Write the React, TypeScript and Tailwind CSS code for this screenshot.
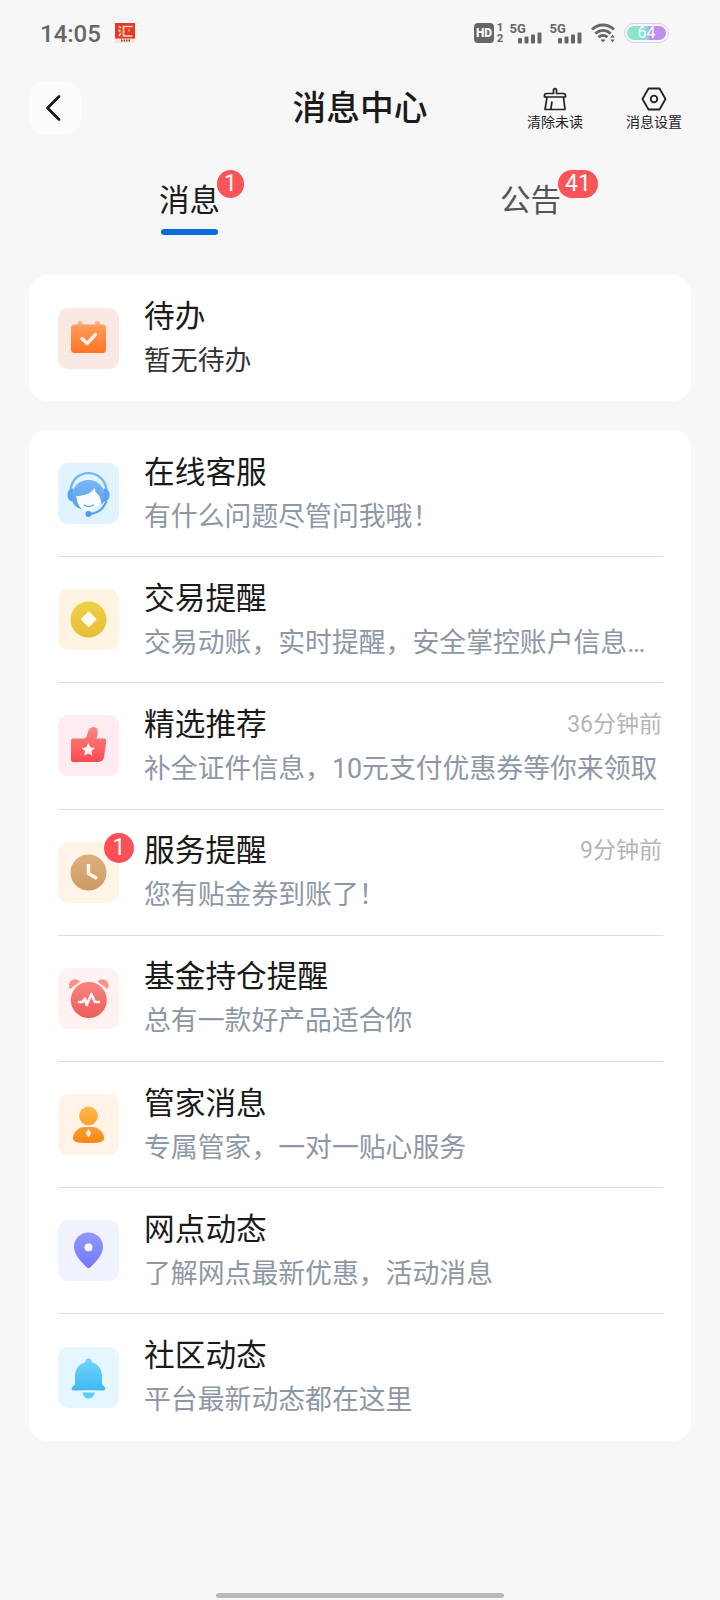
import type { ReactNode } from "react";

type Message = {
  title: string;
  desc: string;
  time?: string;
  badge?: number;
  tile: string;
  icon: ReactNode;
};

const Gradient = ({ id, from, to }: { id: string; from: string; to: string }) => (
  <defs>
    <linearGradient id={id} x1="0" y1="0" x2="0" y2="1">
      <stop offset="0" stopColor={from} />
      <stop offset="1" stopColor={to} />
    </linearGradient>
  </defs>
);

const TodoIcon = () => (
  <svg viewBox="0 0 61 61" className="size-full">
    <Gradient id="todo" from="#ff9d5c" to="#ff7424" />
    <rect x="19.500" y="13" width="5" height="8" rx="2.400" fill="#ffb083" />
    <rect x="37" y="13" width="5" height="8" rx="2.400" fill="#ffb083" />
    <rect x="13" y="16.500" width="35" height="28.500" rx="3.500" fill="url(#todo)" />
    <path d="M24 30.500l5 5 8.500-9" fill="none" stroke="#ffeee4" strokeWidth="3.400" strokeLinecap="round" strokeLinejoin="round" />
  </svg>
);

const ServiceIcon = () => (
  <svg viewBox="0 0 61 61" className="size-full">
    <Gradient id="service" from="#7cb9f5" to="#529ceb" />
    <path d="M12.500 27C15 4.500 46 4.500 48.500 27" fill="none" stroke="#76b5f3" strokeWidth="2.400" />
    <path d="M48.500 38C45.500 46 39 50.500 31 51" fill="none" stroke="#5ba3ee" strokeWidth="2.200" />
    <circle cx="30.500" cy="51" r="3" fill="#4f9aea" />
    <path d="M15.500 25.500V38.500C11.500 38.500 9.500 36 9.500 32S11.500 25.500 15.500 25.500Z" fill="#5ba3ee" />
    <path d="M45.500 25.500V38.500C49.500 38.500 51.500 36 51.500 32S49.500 25.500 45.500 25.500Z" fill="#5ba3ee" />
    <circle cx="30.500" cy="34" r="12.500" fill="#fafdff" />
    <path d="M14.500 38C10 10 51 10 46.500 38L43.500 42C43.500 36 41 32 37.500 29L36.500 25C33 31 25 33 18.500 33C18.500 38 20 43 24 46.500C19 45 15.500 42 14.500 38Z" fill="url(#service)" />
    <path d="M26.500 42c2.500 2.200 6.500 2.200 9 0" fill="none" stroke="#6aadf0" strokeWidth="1.400" strokeLinecap="round" />
  </svg>
);

const CoinIcon = () => (
  <svg viewBox="0 0 61 61" className="size-full">
    <Gradient id="coin" from="#efd04a" to="#e8bd36" />
    <circle cx="30.500" cy="30.500" r="18" fill="url(#coin)" />
    <rect x="25" y="24.500" width="11.500" height="11.500" rx="1" fill="#fffbed" transform="rotate(45 30.700 30.200)" />
  </svg>
);

const ThumbIcon = () => (
  <svg viewBox="0 0 61 61" className="size-full">
    <Gradient id="thumb" from="#ff8583" to="#fb4a4f" />
    <path d="M14.500 23.500H25C28 23.500 29 21 29.700 18C30.500 14 32.500 12 35.500 12C39 12 40.500 15 39.500 19L38.500 23.500H46Q48.500 23.500 48.300 26L46 42Q45 47 40 47H15Q13 47 13 45V25Q13 23.500 14.500 23.500Z" fill="url(#thumb)" />
    <path d="M30.300 28l2 4.300 4.700.6-3.500 3.200.9 4.700-4.100-2.300-4.100 2.300.9-4.700-3.500-3.200 4.700-.6z" fill="#fff3f4" />
  </svg>
);

const ClockIcon = () => (
  <svg viewBox="0 0 61 61" className="size-full">
    <Gradient id="clock" from="#dfb180" to="#cb9964" />
    <circle cx="30.500" cy="30.500" r="18" fill="url(#clock)" />
    <path d="M30.500 22V31.500L39 36.500" fill="none" stroke="#fff7ec" strokeWidth="3.400" strokeLinejoin="round" />
  </svg>
);

const FundIcon = () => (
  <svg viewBox="0 0 61 61" className="size-full">
    <Gradient id="fund" from="#f98580" to="#ef5b59" />
    <path d="M12 20.500C9.500 14 15.500 9 21.500 13.500Z" fill="#f8918c" stroke="#f8918c" strokeLinejoin="round" />
    <path d="M49.500 20.500C52 14 46 9 40 13.500Z" fill="#f8918c" stroke="#f8918c" strokeLinejoin="round" />
    <circle cx="30.800" cy="32" r="18" fill="url(#fund)" />
    <path d="M21 34H24.500L27 30.500L28.700 37L33.500 26L36.800 34H41" fill="none" stroke="#fff5f4" strokeWidth="2.600" strokeLinecap="round" strokeLinejoin="round" />
  </svg>
);

const ManagerIcon = () => (
  <svg viewBox="0 0 61 61" className="size-full">
    <Gradient id="head" from="#fdb948" to="#fba031" />
    <Gradient id="body" from="#fb9d33" to="#fa8513" />
    <circle cx="30.500" cy="21.800" r="9.400" fill="url(#head)" />
    <path d="M26 33H35C41 33 46 39 46 44C46 47 43 48.500 38 48.800Q30.500 49.300 23 48.800C18 48.500 15 47 15 44C15 39 20 33 26 33Z" fill="url(#body)" />
    <path d="M30.500 35l2.700 4.200-2.700 4.200-2.700-4.200z" fill="#fff6ea" />
  </svg>
);

const PinIcon = () => (
  <svg viewBox="0 0 61 61" className="size-full">
    <Gradient id="pin" from="#9298fa" to="#7279f7" />
    <path d="M30.500 12.500C22.500 12.500 16 18.700 16 26.800C16 35 23 41.500 29 47.600Q30.500 49 32 47.600C38 41.500 45 35 45 26.800C45 18.700 38.500 12.500 30.500 12.500Z" fill="url(#pin)" />
    <circle cx="30.500" cy="27.300" r="3.900" fill="#fff" />
  </svg>
);

const BellIcon = () => (
  <svg viewBox="0 0 61 61" className="size-full">
    <Gradient id="bell" from="#72d3fb" to="#3fbaf3" />
    <path d="M24.500 45.500H37Q35.500 51.500 30.500 51.500T24.500 45.500Z" fill="#5fcdf8" />
    <path d="M30.500 11.500C32.500 11.500 33.700 13 33.700 15C40 17 44 22 44 29V37.500L46.300 39.500C48 41.500 47.500 43.500 45 43.500Q30.500 42.800 16 43.500C13.500 43.500 13 41.500 14.700 39.500L17 37.500V29C17 22 21 17 27.300 15C27.300 13 28.500 11.500 30.500 11.500Z" fill="url(#bell)" />
  </svg>
);

const messages: Message[] = [
  { title: "在线客服", desc: "有什么问题尽管问我哦！", tile: "bg-[#e1f3fe]", icon: <ServiceIcon /> },
  { title: "交易提醒", desc: "交易动账，实时提醒，安全掌控账户信息…", tile: "bg-[#fff4e2]", icon: <CoinIcon /> },
  { title: "精选推荐", desc: "补全证件信息，10元支付优惠券等你来领取", time: "36分钟前", tile: "bg-[#ffecf1]", icon: <ThumbIcon /> },
  { title: "服务提醒", desc: "您有贴金券到账了！", time: "9分钟前", badge: 1, tile: "bg-[#fff4e8]", icon: <ClockIcon /> },
  { title: "基金持仓提醒", desc: "总有一款好产品适合你", tile: "bg-[#fff2f1]", icon: <FundIcon /> },
  { title: "管家消息", desc: "专属管家，一对一贴心服务", tile: "bg-[#fff3e8]", icon: <ManagerIcon /> },
  { title: "网点动态", desc: "了解网点最新优惠，活动消息", tile: "bg-[#f1f2ff]", icon: <PinIcon /> },
  { title: "社区动态", desc: "平台最新动态都在这里", tile: "bg-[#e6f6ff]", icon: <BellIcon /> },
];

const Signal = () => (
  <svg width="32" height="22" viewBox="0 0 32 22" fill="#666">
    <text x="-0.500" y="11" fontSize="13" fontWeight="700" fontFamily="Roboto">5G</text>
    <rect x="8" y="16" width="4" height="5.500" rx="1" />
    <rect x="14.500" y="14.500" width="4" height="7" rx="1" />
    <rect x="21" y="12.500" width="4" height="9" rx="1" />
    <rect x="27.500" y="10.500" width="4" height="11" rx="1" />
  </svg>
);

const StatusBar = () => (
  <div className="flex h-[66px] items-center pl-10 pr-[51px] text-[#666]">
    <span className="mt-[2px] text-[24px] font-medium">14:05</span>
    <svg width="20" height="20" viewBox="0 0 20 20" className="ml-[14px]">
      <rect width="20" height="20" fill="#fbe3d3" />
      <rect width="20" height="15.500" fill="#e5382c" />
      <path d="M4 3.500l2 1.500M3.500 7l2 1.500M4 13l2-3M17.500 3.500H8.500V13H17.500" fill="none" stroke="#ffdfae" strokeWidth="1.700" />
      <path d="M12.500 6.500h3l-1.500 2.500z" fill="#f7a35e" />
      <path d="M6 17.500h9" stroke="#7b4a3c" strokeWidth="1.800" strokeDasharray="1.500 1" />
    </svg>
    <div className="ml-auto flex items-center">
      <span className="flex size-5 items-center justify-center rounded-[4px] bg-[#666] text-[12px] font-black text-[#f7f7f7]">HD</span>
      <span className="ml-[2px] flex w-2 flex-col text-center text-[11.5px] font-bold leading-none">
        <span>1</span>
        <span>2</span>
      </span>
      <div className="ml-[6px] flex gap-2">
        <Signal />
        <Signal />
      </div>
      <svg width="24" height="20" viewBox="0 0 24 20" className="ml-[9px]" fill="none" stroke="#666" strokeWidth="2.800">
        <path d="M1 6.500C7.500.5 16.500.5 23 6.500" />
        <path d="M4.300 10.500C9 6.500 15 6.500 19.700 10.500" />
        <path d="M7.500 14.200C10.500 11.700 13.500 11.700 16.500 14.200" />
        <path d="M9.500 16.800Q12 15.500 14.500 16.800L12 19.500Z" fill="#666" stroke="none" />
        <path d="M19.300 14.500l2.200-3 2.200 3zM19.300 16.500l2.200 3 2.200-3z" fill="#666" stroke="none" />
      </svg>
      <span className="ml-[9px] flex h-5 w-[45px] rounded-full border border-[#dccfe8] p-[2px]">
        <span className="flex flex-1 items-center justify-center rounded-full bg-linear-to-r from-[#8beab6] via-[#83dce2] via-50% to-[#bc8ff0] to-60% text-[16px] leading-none text-white">64</span>
      </span>
    </div>
  </div>
);

const Header = () => (
  <header className="grid h-[83px] grid-cols-[1fr_auto_1fr] items-center pl-[29px] pr-[38px]">
    <button className="mt-[1px] flex size-[52px] items-center justify-center rounded-[14px] bg-[#fcfcfc]">
      <svg width="16" height="28" viewBox="0 0 16 28" fill="none" stroke="#1a1a1a" strokeWidth="2.800" strokeLinecap="round" strokeLinejoin="round" className="-ml-1">
        <path d="M14 2.500L2.500 14L14 25.500" />
      </svg>
    </button>
    <h1 className="ml-[9px] mt-[4px] text-[33.7px] font-medium text-[#1a1a1a]">消息中心</h1>
    <div className="mt-[2px] flex justify-end gap-[43px] text-[14px] leading-[18px] text-[#222]">
      <button className="flex flex-col items-center gap-[2px]">
        <svg width="24" height="24" viewBox="0 0 24 24" fill="none" stroke="#222" strokeWidth="1.700" strokeLinejoin="round">
          <path d="M10.500 6.500V2.500Q12 .8 13.500 2.500V6.500H20.500Q22.500 6.500 22.500 8.500V10H1.500V8.500Q1.500 6.500 3.500 6.500Z" />
          <path d="M4 10L2 22.500H22L20.500 10M9 14.500L7.800 22.500" />
        </svg>
        <span>清除未读</span>
      </button>
      <button className="flex flex-col items-center gap-[2px]">
        <svg width="26" height="24" viewBox="0 0 26 24" fill="none" stroke="#222" strokeWidth="1.800" strokeLinejoin="round">
          <path d="M7.500 1.500H18.500L24.500 12L18.500 22.500H7.500L1.500 12Z" />
          <circle cx="13" cy="12" r="3.300" />
        </svg>
        <span>消息设置</span>
      </button>
    </div>
  </header>
);

const Tab = ({ label, count, active }: { label: string; count: number; active?: boolean }) => (
  <div className="flex flex-1 flex-col items-center pt-[30px]">
    <div className={`relative text-[30.5px] leading-[44px] ${active ? "text-[#1a1a1a]" : "text-[#555]"}`}>
      {label}
      <span className="absolute -top-[9px] left-[58px] flex h-7 min-w-[27px] items-center justify-center rounded-full bg-[#fc5458] px-[7px] pb-[2px] text-[23px] leading-none text-white">
        {count}
      </span>
    </div>
    {active && <div className="mt-[6px] h-[6px] w-[57px] rounded-full bg-[#0a6bdb]" />}
  </div>
);

const Row = ({ title, desc, time, badge, tile, icon, descColor = "text-[#8d97a5]" }: Message & { descColor?: string }) => (
  <div className="flex h-full items-center gap-[25px]">
    <div className={`relative size-[61px] shrink-0 rounded-[10px] ${tile}`}>
      {icon}
      {badge && (
        <span className="absolute -top-[9px] left-[46px] flex size-[30px] items-center justify-center rounded-full bg-[#fc5056] text-[23px] leading-none text-white">
          {badge}
        </span>
      )}
    </div>
    <div className="min-w-0 flex-1 pt-[2px]">
      <div className="flex items-center justify-between">
        <span className="text-[30.7px] leading-[44px] text-[#1a1a1a]">{title}</span>
        {time && <span className="mr-[1px] text-[23px] leading-[44px] text-[#b5b5b5]">{time}</span>}
      </div>
      <p className={`whitespace-nowrap text-[26.85px] leading-[44px] ${descColor}`}>{desc}</p>
    </div>
  </div>
);

export default function App() {
  return (
    <div className="flex h-[1600px] w-[720px] flex-col bg-[#f7f7f7] font-[Roboto,'Noto_Sans_CJK_SC',sans-serif]">
      <StatusBar />
      <Header />
      <nav className="flex h-[126px] pl-[19px] pr-[19px]">
        <Tab label="消息" count={1} active />
        <Tab label="公告" count={41} />
      </nav>

      <main className="flex flex-col gap-[29px] px-[29px]">
        <section className="h-[126px] rounded-[18px] bg-white px-[29px]">
          <Row title="待办" desc="暂无待办" descColor="text-[#333]" tile="bg-[#fae9e2]" icon={<TodoIcon />} />
        </section>
        <section className="rounded-[18px] bg-white pl-[29px] pr-[28px] pt-[1px]">
          {messages.map((m) => (
            <div key={m.title} className="h-[126.2px] border-b border-[#dedede] last:border-b-0">
              <Row {...m} />
            </div>
          ))}
        </section>
      </main>

      <div className="mb-[2px] mt-auto h-[5px] w-[288px] self-center rounded-full bg-[#bababa]" />
    </div>
  );
}
